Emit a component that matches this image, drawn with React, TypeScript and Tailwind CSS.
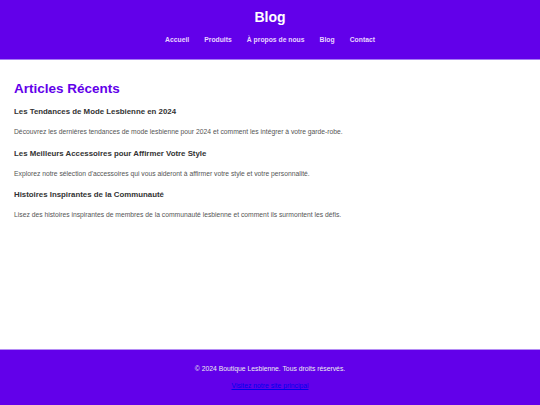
import React from 'react';

const navLinks = ['Accueil', 'Produits', 'À propos de nous', 'Blog', 'Contact'];

const articles = [
  {
    title: 'Les Tendances de Mode Lesbienne en 2024',
    text: 'Découvrez les dernières tendances de mode lesbienne pour 2024 et comment les intégrer à votre garde-robe.',
  },
  {
    title: 'Les Meilleurs Accessoires pour Affirmer Votre Style',
    text: "Explorez notre sélection d'accessoires qui vous aideront à affirmer votre style et votre personnalité.",
  },
  {
    title: 'Histoires Inspirantes de la Communauté',
    text: 'Lisez des histoires inspirantes de membres de la communauté lesbienne et comment ils surmontent les défis.',
  },
];

export default function App() {
  return (
    <div
      className="min-h-screen flex flex-col bg-white"
      style={{ fontFamily: '"Liberation Sans", Arial, sans-serif' }}
    >
      <header className="bg-[#6200ea] text-white text-center h-[60px] border-b border-[#a67cf2] pt-[7px]">
        <h1 className="text-[14px] font-bold leading-[20px]">Blog</h1>
        <nav className="flex justify-center gap-[15px] mt-[6px]">
          {navLinks.map((link) => (
            <a key={link} className="text-[6.8px] font-bold text-[#e8d4ff] leading-[14px]">
              {link}
            </a>
          ))}
        </nav>
      </header>

      <main className="flex-1 px-[14px] pt-[20px]">
        <h2 className="text-[13.5px] font-bold text-[#6200ea] leading-[18px]">Articles Récents</h2>
        <div className="mt-[7px]">
          {articles.map((a) => (
            <article key={a.title} className="mb-[8.5px]">
              <h3 className="text-[7.85px] font-bold text-[#333333] leading-[14px]">{a.title}</h3>
              <p className="text-[6.75px] text-[#555555] leading-[12px] mt-[7px]">{a.text}</p>
            </article>
          ))}
        </div>
      </main>

      <footer className="bg-[#6200ea] text-center h-[56px] border-t border-[#b48cf5] pt-[13px]">
        <p className="text-[6.8px] text-[#eeeeee] leading-[12px]">© 2024 Boutique Lesbienne. Tous droits réservés.</p>
        <a className="block mt-[5px] text-[6.8px] text-[#0000ee] underline leading-[12px]">
          Visitez notre site principal
        </a>
      </footer>
    </div>
  );
}
